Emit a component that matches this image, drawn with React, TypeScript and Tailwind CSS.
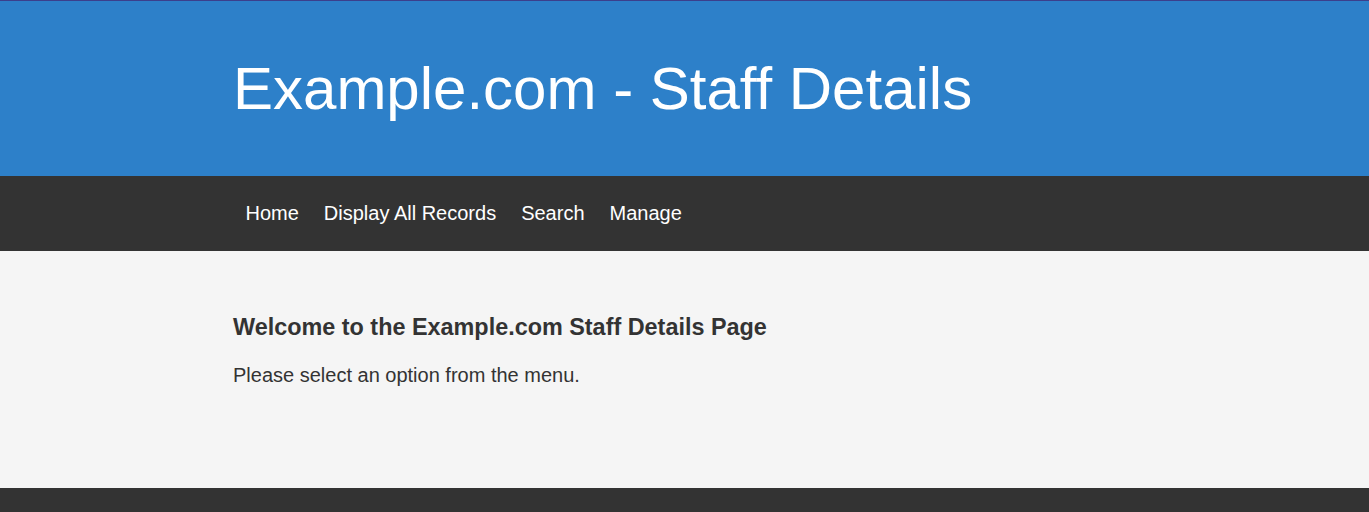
export default function App() {
  const links = ['Home', 'Display All Records', 'Search', 'Manage'];

  return (
    <div className="min-h-screen bg-[#f5f5f5] font-['Liberation_Sans',Arial,sans-serif] text-[#333]">
      {/* header */}
      <header className="border-t border-[#3b3f8c] bg-[#2d80c9]">
        <div className="mx-auto w-[903px] py-[53px]">
          <h1 className="text-[60px] leading-[69px] font-normal text-white">
            Example.com - Staff Details
          </h1>
        </div>
      </header>

      {/* nav */}
      <nav className="bg-[#333]">
        <ul className="mx-auto flex h-[75px] w-[903px] items-center pt-[2px]">
          {links.map((l) => (
            <li key={l}>
              <a href="#" className="px-[12.5px] text-[20px] leading-[23px] text-white">
                {l}
              </a>
            </li>
          ))}
        </ul>
      </nav>

      {/* content */}
      <main className="h-[237px] bg-[#f5f5f5]">
        <div className="mx-auto w-[903px] pt-[63px]">
          <h3 className="mb-[23px] text-[23.4px] leading-[27px] font-bold">
            Welcome to the Example.com Staff Details Page
          </h3>
          <p className="text-[20px] leading-[23px]">Please select an option from the menu.</p>
        </div>
      </main>

      <footer className="h-[24px] bg-[#333]"></footer>
    </div>
  );
}
